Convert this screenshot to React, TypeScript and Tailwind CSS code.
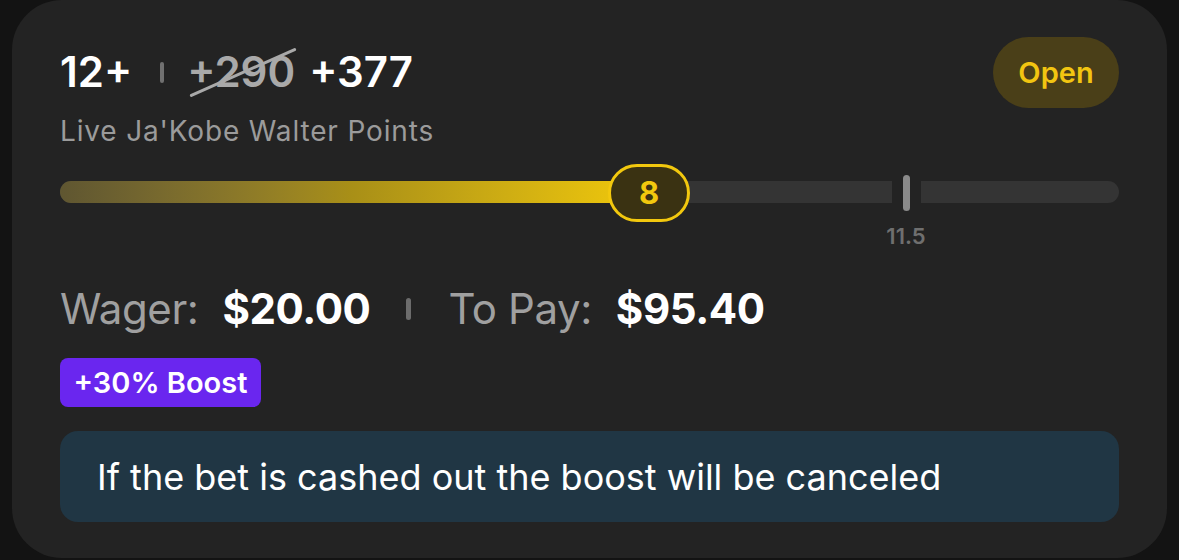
import React from "react";

export default function App() {
  return (
    <div
      className="w-full h-[560px] bg-[#131313] px-[12px] pb-[2px] overflow-hidden"
      style={{ fontFamily: "Inter, 'Noto Sans', sans-serif" }}
    >
      <div className="h-[558px] bg-[#232323] rounded-[50px] px-[48px] pt-[37px]">
        {/* header */}
        <div className="flex items-start justify-between">
          <div className="flex flex-col pt-[11px]">
            <div className="flex items-center h-[48px] text-[42px] leading-[48px] font-semibold">
              <span className="text-white">12+</span>
              <span className="w-[4px] h-[21px] bg-[#707070] rounded-full ml-[28px] mr-[23px]" />
              <span className="relative text-[#a9a9a9]">
                +290
                <span className="absolute left-[-2px] top-[23px] w-[116px] h-[3px] bg-[#a9a9a9] rounded-full -rotate-[24deg]" />
              </span>
              <span className="text-white ml-[14px]">+377</span>
            </div>
            <div className="mt-[19px] text-[28px] leading-[32px] tracking-[0.03em] text-[#9b9b9b]">
              Live Ja'Kobe Walter Points
            </div>
          </div>
          <div className="w-[126px] h-[71px] rounded-full bg-[#4a3f18] flex items-center justify-center text-[29px] font-semibold text-[#f2c511]">
            Open
          </div>
        </div>

        {/* slider */}
        <div className="relative h-[84px] mt-[17px]">
          <div className="absolute left-0 right-0 top-[17px] h-[22px] rounded-full bg-[#343434] overflow-hidden">
            <div className="h-full w-[580px] bg-gradient-to-r from-[#5f5631] via-[#a88f17] to-[#f0c80a]" />
          </div>
          {/* gap + marker */}
          <div className="absolute left-[832px] top-[14px] w-[29px] h-[28px] bg-[#232323]" />
          <div className="absolute left-[843px] top-[11px] w-[7px] h-[36px] rounded-full bg-[#8a8a8a]" />
          <div className="absolute left-[806px] w-[80px] top-[59px] text-center text-[22px] leading-[26px] font-semibold text-[#6f6f6f]">
            11.5
          </div>
          {/* thumb */}
          <div className="absolute left-[548px] top-0 w-[82px] h-[58px] rounded-full border-[3px] border-[#f2c80e] bg-[#3a3212] flex items-center justify-center text-[31px] font-bold text-[#f2c80e]">
            8
          </div>
        </div>

        {/* wager */}
        <div className="flex items-center h-[48px] mt-[37px] text-[42px] leading-[48px]">
          <span className="text-[#a0a0a0] tracking-[-0.01em]">Wager:</span>
          <span className="text-white font-bold ml-[24px] tracking-[-0.01em]">$20.00</span>
          <span className="w-[5px] h-[22px] bg-[#6c6c6c] rounded-full ml-[36px] mr-[37px]" />
          <span className="text-[#a0a0a0] tracking-[-0.01em]">To Pay:</span>
          <span className="text-white font-bold ml-[24px] tracking-[-0.01em]">$95.40</span>
        </div>

        {/* boost */}
        <div className="mt-[25px] flex">
          <div className="h-[49px] w-[201px] rounded-[8px] bg-[#6a26ef] flex items-center justify-center text-[29px] font-semibold text-white">
            +30% Boost
          </div>
        </div>

        {/* info */}
        <div className="mt-[24px] h-[91px] rounded-[18px] bg-[#203644] flex items-center pl-[37px] text-[36px] text-white">
          If the bet is cashed out the boost will be canceled
        </div>
      </div>
    </div>
  );
}
